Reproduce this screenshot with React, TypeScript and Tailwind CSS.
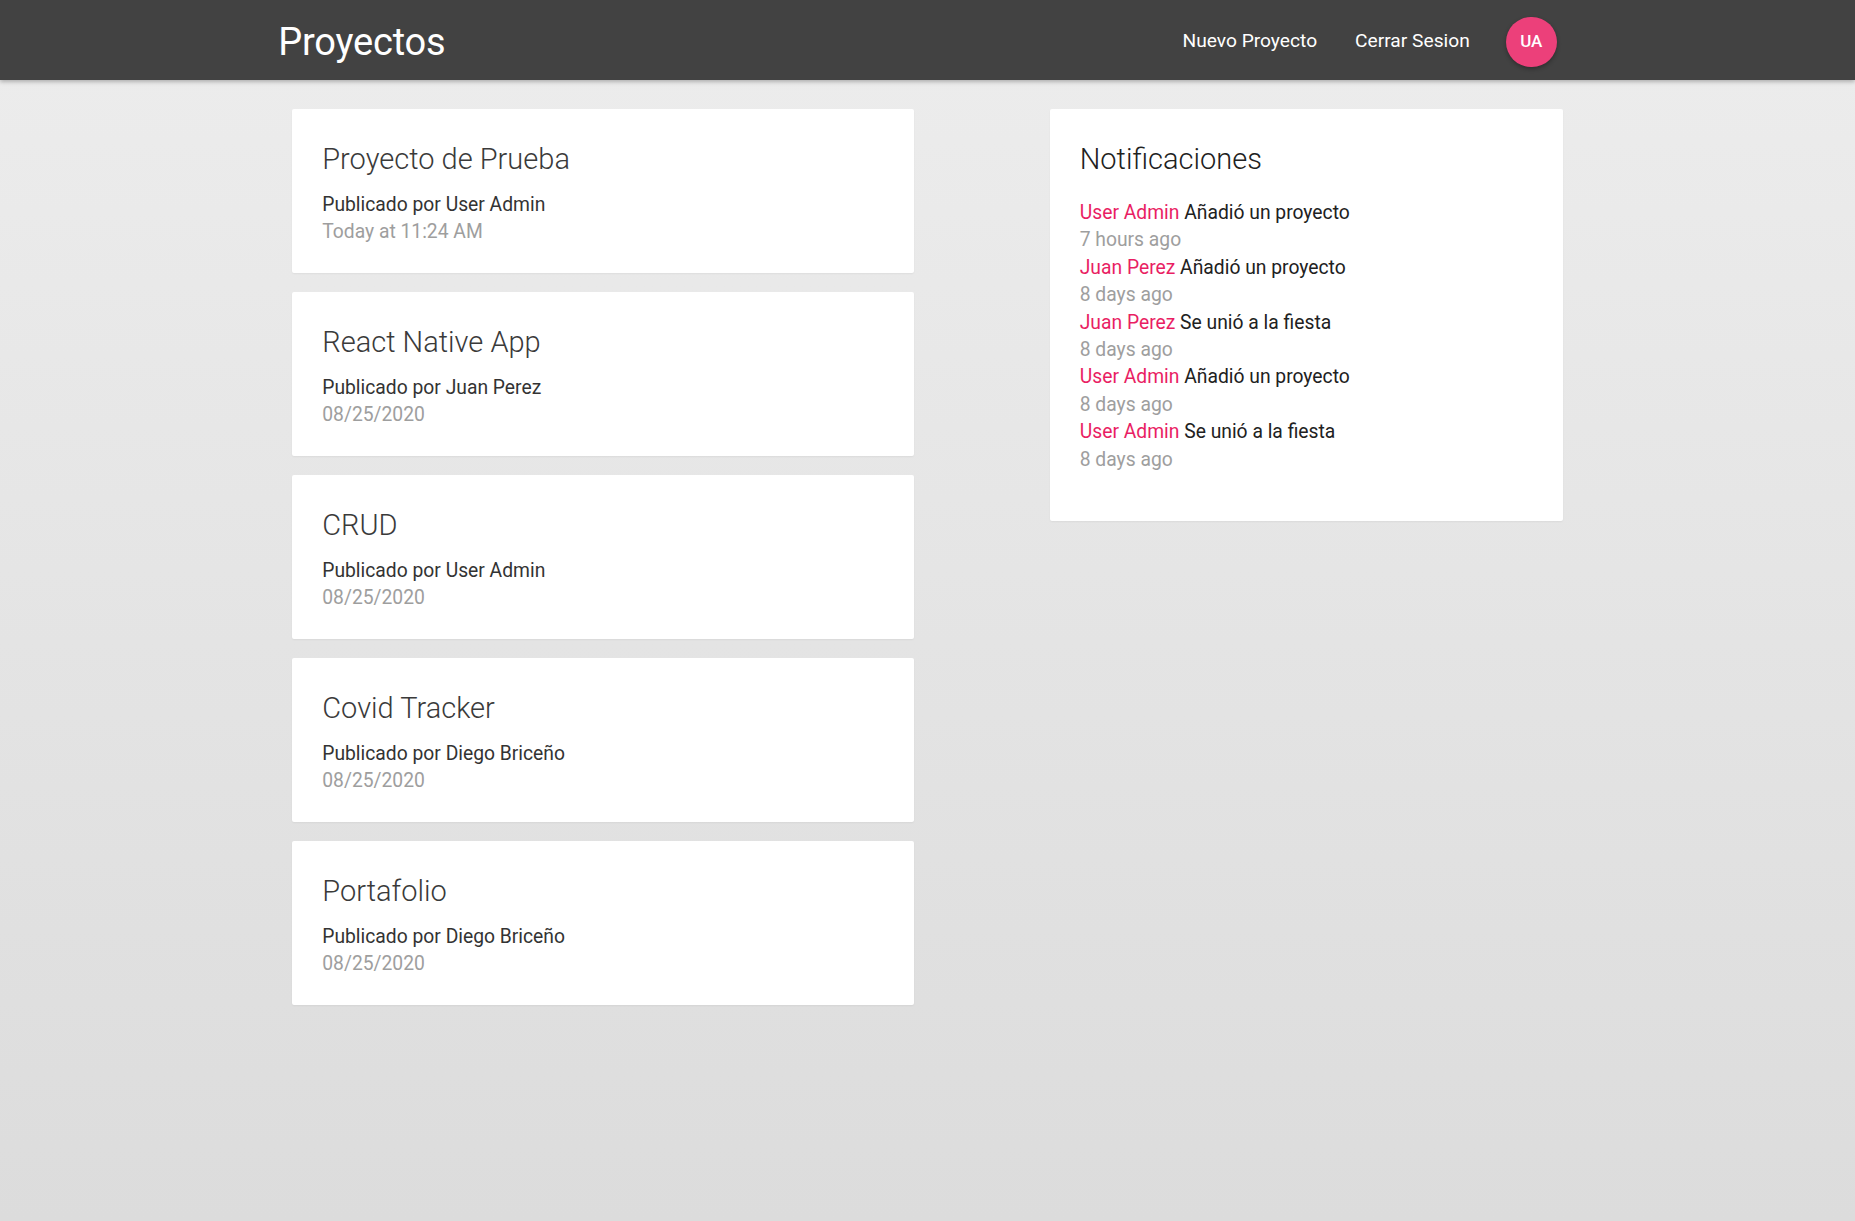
import React from 'react';

type Project = {
  title: string;
  author: string;
  date: string;
};

type Notification = {
  user: string;
  content: string;
  time: string;
};

const projects: Project[] = [
  { title: 'Proyecto de Prueba', author: 'User Admin', date: 'Today at 11:24 AM' },
  { title: 'React Native App', author: 'Juan Perez', date: '08/25/2020' },
  { title: 'CRUD', author: 'User Admin', date: '08/25/2020' },
  { title: 'Covid Tracker', author: 'Diego Briceño', date: '08/25/2020' },
  { title: 'Portafolio', author: 'Diego Briceño', date: '08/25/2020' },
];

const notifications: Notification[] = [
  { user: 'User Admin', content: 'Añadió un proyecto', time: '7 hours ago' },
  { user: 'Juan Perez', content: 'Añadió un proyecto', time: '8 days ago' },
  { user: 'Juan Perez', content: 'Se unió a la fiesta', time: '8 days ago' },
  { user: 'User Admin', content: 'Añadió un proyecto', time: '8 days ago' },
  { user: 'User Admin', content: 'Se unió a la fiesta', time: '8 days ago' },
];

function Navbar() {
  return (
    <nav className="h-20 bg-[#424242] shadow-[0_2px_4px_rgba(0,0,0,0.25)] relative z-10">
      <div className="w-[70%] mx-auto h-full flex items-center justify-between pt-[3px]">
        <a href="#" className="text-white text-[38px] tracking-[-0.2px] leading-none">
          Proyectos
        </a>
        <ul className="flex items-center mr-[20px]">
          <li className="mr-[38px]">
            <a href="#" className="text-white text-[19.2px]">Nuevo Proyecto</a>
          </li>
          <li className="mr-[36px]">
            <a href="#" className="text-white text-[19.2px]">Cerrar Sesion</a>
          </li>
          <li>
            <a
              href="#"
              className="flex items-center justify-center w-[51px] h-[50px] rounded-full bg-[#ec407a] text-white text-[17px] font-medium shadow-[0_2px_4px_rgba(0,0,0,0.3)]"
            >
              UA
            </a>
          </li>
        </ul>
      </div>
    </nav>
  );
}

function ProjectCard({ project }: { project: Project }) {
  return (
    <div className="bg-white rounded-[2px] shadow-[0_1px_2px_rgba(0,0,0,0.05)] h-[164px] px-[30px] pt-[30px]">
      <span className="block text-[29px] leading-[40px] font-light text-[#3a3a3a] mb-3">
        {project.title}
      </span>
      <p className="text-[19.3px] leading-[27px] text-[#333333]">Publicado por {project.author}</p>
      <p className="text-[19.3px] leading-[27px] text-[#9e9e9e]">{project.date}</p>
    </div>
  );
}

function Notifications() {
  return (
    <div className="bg-white rounded-[2px] shadow-[0_1px_2px_rgba(0,0,0,0.05)] px-[30px] pt-[30px] pb-[48px]">
      <span className="block text-[29px] leading-[40px] font-light text-[#212121] mb-5">
        Notificaciones
      </span>
      <ul>
        {notifications.map((n, i) => (
          <li key={i} className="text-[19.3px] leading-[27.4px]">
            <span className="text-[#e91e63]">{n.user}</span>{' '}
            <span className="text-[#212121]">{n.content}</span>
            <div className="text-[#9e9e9e]">{n.time}</div>
          </li>
        ))}
      </ul>
    </div>
  );
}

export default function App() {
  return (
    <div className="min-h-screen bg-linear-to-b from-[#ededed] to-[#dcdcdc] font-['Roboto',sans-serif]">
      <Navbar />
      <main className="w-[70%] mx-auto grid grid-cols-12 pt-[29px]">
        <div className="col-span-6 px-[14px] flex flex-col gap-[19px]">
          {projects.map((p, i) => (
            <ProjectCard key={i} project={p} />
          ))}
        </div>
        <div className="col-span-5 col-start-8 px-[14px]">
          <Notifications />
        </div>
      </main>
    </div>
  );
}
